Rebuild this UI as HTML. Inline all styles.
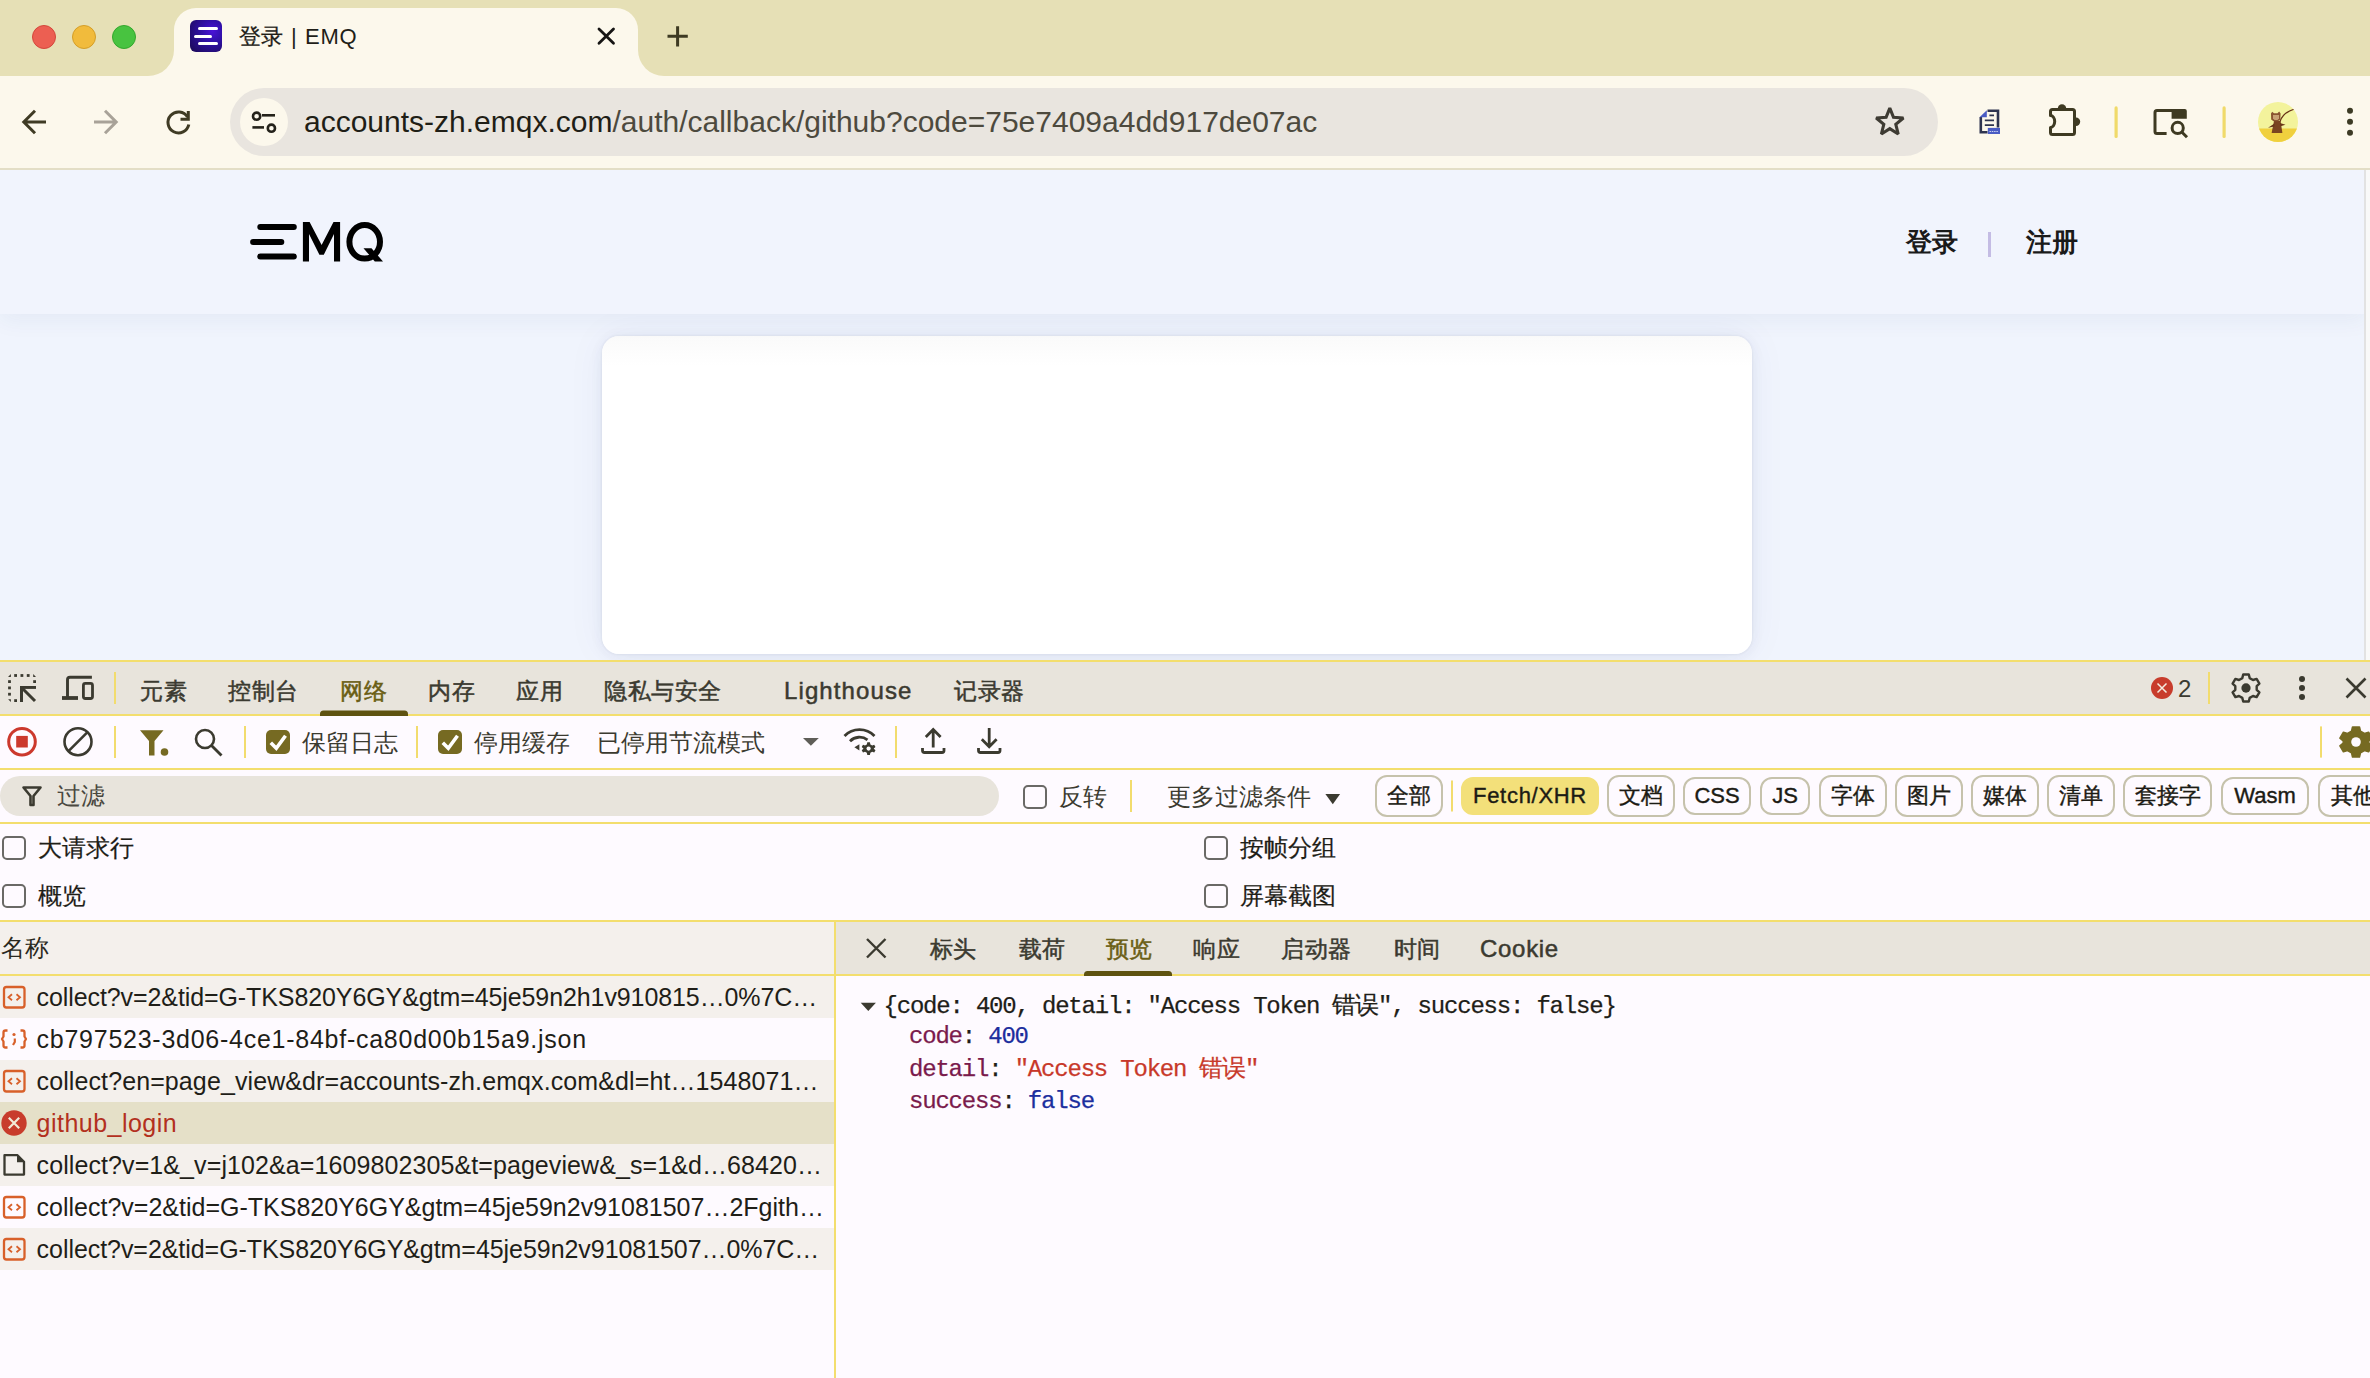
<!DOCTYPE html>
<html><head><meta charset="utf-8">
<style>
*{box-sizing:border-box;margin:0;padding:0}
html,body{width:2370px;height:1378px;overflow:hidden;background:#fefaff;font-family:"Liberation Sans",sans-serif;position:relative}
.a{position:absolute}
.t{position:absolute;white-space:nowrap;line-height:1}
svg{position:absolute;overflow:visible}
/* chrome */
#strip{left:0;top:0;width:2370px;height:76px;background:#e6e0b6}
#tb{left:0;top:76px;width:2370px;height:92px;background:#fcf8ec}
#tbline{left:0;top:168px;width:2370px;height:2px;background:#e3dec6}
.light{border-radius:50%;width:24px;height:24px;top:25px}
#tab{left:174px;top:8px;width:464px;height:70px;background:#fcf8ec;border-radius:22px 22px 0 0}
.flare{width:26px;height:26px;top:50px;background:#fcf8ec}
#omni{left:230px;top:88px;width:1708px;height:68px;border-radius:34px;background:#e9e5df}
#site{left:240px;top:98px;width:48px;height:48px;border-radius:50%;background:#fcf8ec}
/* page */
#page{left:0;top:170px;width:2370px;height:490px;background:#f0f4fd;overflow:hidden}
#hdr{left:0;top:0;width:2366px;height:144px;background:#f1f4fd;box-shadow:0 6px 22px rgba(40,60,120,0.06)}
#card{left:602px;top:166px;width:1150px;height:318px;background:linear-gradient(#fafafa,#fff 30px);border-radius:17px;box-shadow:0 0 2px 1px rgba(0,0,0,0.035),0 2px 14px rgba(40,50,110,0.065),0 0 40px rgba(40,60,140,0.05)}
/* devtools */
#dt{left:0;top:660px;width:2370px;height:718px;background:#fefaff}
.yl{position:absolute;left:0;width:2370px;height:2px;background:#f3de6e}
.ys{position:absolute;width:2px;background:#f3de6e}
.dtab{font-size:23px;letter-spacing:0.6px;color:#3b3a30;-webkit-text-stroke:0.5px currentColor}
.lbl{font-size:24px;color:#3b3a30}
.cb{position:absolute;width:24px;height:24px;border:2px solid #6a6966;border-radius:5px}
.cbc{position:absolute;width:24px;height:24px;border-radius:5px;background:#766a22}
.row{position:absolute;left:0;width:834px;height:42px}
.rt{position:absolute;left:36.6px;top:9px;font-size:25px;color:#1f1e18;white-space:nowrap;line-height:1}
.mono{font-family:"Liberation Mono",monospace;font-size:24px;letter-spacing:-1.2px;color:#1f1e18;white-space:pre;line-height:1;-webkit-text-stroke:0.25px currentColor}
.chip{position:absolute;height:42px;border:2px solid #c6c2ac;border-radius:12px;font-size:22px;color:#1c1b14;-webkit-text-stroke:0.4px currentColor;white-space:nowrap;line-height:38px;text-align:center}
</style></head><body>
<!-- TAB STRIP -->
<div class="a" id="strip"></div>
<div class="a light" style="left:32px;background:#ec5f52;border:1px solid #d4473b"></div>
<div class="a light" style="left:72px;background:#f1bb3c;border:1px solid #d49e28"></div>
<div class="a light" style="left:112px;background:#48c340;border:1px solid #34a72d"></div>
<div class="a" id="tab"></div>
<div class="a flare" style="left:148px"></div>
<div class="a flare" style="left:638px"></div>
<div class="a" style="left:148px;top:50px;width:26px;height:26px;background:#e6e0b6;border-radius:0 0 26px 0"></div>
<div class="a" style="left:638px;top:50px;width:26px;height:26px;background:#e6e0b6;border-radius:0 0 0 26px"></div>
<div class="a" id="tb"></div>
<div class="a" id="tbline"></div>

<!-- tab content -->
<div class="a" style="left:190px;top:20px;width:32px;height:32px;border-radius:6px;background:radial-gradient(circle at 70% 35%,#4a12d8 0%,#3010a8 35%,#1a0a50 100%)"></div>
<div class="a" style="left:198px;top:26.5px;width:20px;height:3.4px;border-radius:2px;background:#fff"></div>
<div class="a" style="left:194px;top:34.5px;width:18px;height:3.4px;border-radius:2px;background:#fff"></div>
<div class="a" style="left:198px;top:42px;width:20px;height:3.4px;border-radius:2px;background:#fff"></div>
<div class="t" id="title" style="left:239px;top:26px;font-size:22px;color:#1f1e18;word-spacing:2px"><span style="-webkit-text-stroke:0.3px currentColor">登录</span> | <span style="letter-spacing:0.8px">EMQ</span></div>
<svg style="left:0;top:0" width="2370" height="170">
 <g stroke="#161514" stroke-width="2.8" stroke-linecap="round" fill="none">
  <path d="M599 29 L613.5 43.3 M613.5 29 L599 43.3"/>
 </g>
 <g stroke="#3e3a22" stroke-width="3" fill="none">
  <path d="M667.5 36.3 H687.8 M677.6 26.2 V46.4"/>
 </g>
 <g stroke="#3f3b24" stroke-width="3" fill="none" stroke-linejoin="miter">
  <path d="M46 122 H24.5 M35 110.8 L23.8 122 L35 133.2"/>
 </g>
 <g stroke="#a8a298" stroke-width="3" fill="none">
  <path d="M94 122 H115.5 M105 110.8 L116.2 122 L105 133.2"/>
 </g>
 <g stroke="#3f3b24" stroke-width="3" fill="none">
  <path d="M187.5 117 A10.5 10.5 0 1 0 188.8 124.5"/>
  <path d="M180.5 119.3 H188.3 V111" stroke-linejoin="miter"/>
 </g>
</svg>
<div class="a" id="omni"></div>
<div class="a" id="site"></div>
<svg style="left:0;top:0" width="2370" height="170">
 <g stroke="#24221a" stroke-width="2.6" fill="none">
  <circle cx="256.6" cy="116.2" r="3.6"/>
  <path d="M262 115.3 H275"/>
  <path d="M252.4 127.4 H264"/>
  <circle cx="271.4" cy="128.2" r="3.6"/>
 </g>
</svg>
<div class="t" id="url" style="left:304px;top:107px;font-size:30px;color:#1f1e16">accounts-zh.emqx.com<span style="color:#4d4a3e">/auth/callback/github?code=75e7409a4dd917de07ac</span></div>
<svg style="left:0;top:0" width="2370" height="170">
 <path d="M1889.8 108.1 L1893.5 117.3 L1903.4 118.0 L1895.8 124.3 L1898.2 134.0 L1889.8 128.7 L1881.4 134.0 L1883.8 124.3 L1876.2 118.0 L1886.1 117.3 Z" fill="none" stroke="#3e3b33" stroke-width="3.1" stroke-linejoin="miter" stroke-miterlimit="2.2"/>
 <!-- doc ext icon -->
 <path d="M1987.5 110.7 H1998 V127.5" fill="none" stroke="#2e3450" stroke-width="2.6"/>
 <path d="M1980.8 117 V132.3 H1987.5" fill="none" stroke="#2e3450" stroke-width="2.6"/>
 <path d="M1979.5 117.3 L1986.8 110.2 V117.3 Z" fill="#4a5cc4"/>
 <path d="M1989.4 115.3 H1994 M1984.8 120.3 H1994 M1984.8 125.1 H1994" stroke="#2e3450" stroke-width="1.8"/>
 <rect x="1987.8" y="127.9" width="12.2" height="6.1" fill="#4a5cc4"/>
 <path d="M1989.5 131.5 H1998" stroke="#c8d0f0" stroke-width="1" stroke-dasharray="1.5 0.8"/>
 <!-- puzzle -->
 <path d="M2052.5 109.5 H2072.5 A2 2 0 0 1 2074.5 111.5 V132.5 A2 2 0 0 1 2072.5 134.5 H2052.5 A2 2 0 0 1 2050.5 132.5 V127.5 A4.2 6 0 0 0 2050.5 115.5 V111.5 A2 2 0 0 1 2052.5 109.5 Z" fill="none" stroke="#3e3a22" stroke-width="3" stroke-linejoin="round"/>
 <path d="M2057.8 108.5 A4.2 4.2 0 0 1 2066.2 108.5 Z" fill="#3e3a22"/>
 <path d="M2076 117.6 A4.2 4.2 0 0 1 2076 126 Z" fill="#3e3a22"/>
 <rect x="2114.5" y="106.3" width="3.2" height="31.7" rx="1.6" fill="#f0da6a"/>
 <!-- tab search -->
 <path d="M2166.6 133.5 H2157 A2 2 0 0 1 2155 131.5 V112.5 A2 2 0 0 1 2157 110.5 H2172" fill="none" stroke="#3e3a22" stroke-width="3"/>
 <path d="M2171.6 109 H2184.8 A2 2 0 0 1 2186.8 111 V118.8 H2171.6 Z" fill="#3e3a22"/>
 <circle cx="2177.7" cy="127.9" r="5.6" fill="none" stroke="#3e3a22" stroke-width="3"/>
 <path d="M2181.5 131.7 L2187 137.2" stroke="#3e3a22" stroke-width="3"/>
 <rect x="2222.5" y="106.3" width="3.2" height="31.7" rx="1.6" fill="#f0da6a"/>
 <!-- avatar -->
 <defs><clipPath id="avc"><circle cx="2278" cy="122" r="20"/></clipPath></defs>
 <g clip-path="url(#avc)">
  <rect x="2258" y="102" width="40" height="40" fill="#f3f39c"/>
  <rect x="2258" y="128.5" width="40" height="14" fill="#f0d03e"/>
  <path d="M2274 121 H2280.6 L2282.4 133 H2271.6 Z" fill="#7a4420"/>
  <path d="M2268 127.8 L2274.5 123.5 L2274.5 126.5 Z M2285.5 124.8 L2280 123 L2280.5 126.2 Z" fill="#6a3818"/>
  <path d="M2271 113.5 L2272.2 111.8 L2274 113.2 H2277.5 L2279.2 111.6 L2280.6 113.5 L2280.3 119.5 L2278 121.3 H2273.5 L2271.2 119.5 Z" fill="#8a5530"/>
  <path d="M2273 115 H2279 V118.5 L2277.5 120 H2274.5 L2273 118.5 Z" fill="#c8a274"/>
  <path d="M2280 121.5 Q2283 112.5 2294.5 109" stroke="#6a3418" stroke-width="1.3" fill="none"/>
 </g>
 <g fill="#3c3a24"><circle cx="2350" cy="110.8" r="3"/><circle cx="2350" cy="121.8" r="3"/><circle cx="2350" cy="132.8" r="3"/></g>
</svg>

<!-- PAGE -->
<div class="a" id="page">
 <div class="a" id="card"></div>
 <div class="a" id="hdr"></div>
 <div class="a" style="left:2364px;top:0;width:6px;height:490px;background:#f9f9f9;border-left:2px solid #e2e2e2"></div>
</div>
<svg style="left:0;top:0" width="2370" height="660">
 <g fill="#000">
  <rect x="257.3" y="224.1" width="39.5" height="6" rx="3"/>
  <rect x="250.1" y="238.9" width="34.2" height="6" rx="3"/>
  <rect x="257.3" y="253.6" width="39.5" height="6" rx="3"/>
  <path d="M302.9 222 H309.6 L321.6 245 L333.5 222 H340.1 V261.5 H334 V234 L323.8 254.7 H319.4 L309 234 V261.5 H302.9 Z"/>
 </g>
 <ellipse cx="364.7" cy="241.8" rx="15.3" ry="16.8" fill="none" stroke="#000" stroke-width="6"/>
 <path d="M363.5 248.2 H371.5 L383 261.5 H374.8 Z" fill="#000"/>
</svg>
<div class="t" style="left:1906px;top:229px;font-size:26px;font-weight:700;color:#1a1a1a">登录</div>
<div class="a" style="left:1988px;top:232px;width:3px;height:25px;background:#c4bce4"></div>
<div class="t" style="left:2026px;top:229px;font-size:26px;font-weight:700;color:#1a1a1a">注册</div>

<!-- DEVTOOLS -->
<div class="a" id="dt"></div>
<div class="a" style="left:0;top:662px;width:2370px;height:52px;background:#e8e4dc"></div>
<div class="yl" style="top:660px"></div>
<div class="yl" style="top:714px"></div>
<div class="yl" style="top:768px"></div>
<div class="yl" style="top:822px"></div>
<div class="yl" style="top:920px"></div>
<!-- main tabs -->
<svg style="left:0;top:0" width="2370" height="1378">
 <!-- inspect icon -->
 <g fill="#3b3a30">
  <path d="M8.1 676.9 L10.9 674.1 V676.9 Z"/>
  <rect x="14.2" y="674.1" width="2.8" height="2.8"/><rect x="20.5" y="674.1" width="2.8" height="2.8"/><rect x="26.8" y="674.1" width="2.8" height="2.8"/>
  <path d="M33.2 674.1 L36 676.9 H33.2 Z"/>
  <rect x="8.1" y="680.2" width="2.8" height="2.8"/><rect x="8.1" y="686.5" width="2.8" height="2.8"/><rect x="8.1" y="692.8" width="2.8" height="2.8"/>
  <path d="M8.1 699.2 H10.9 V702 Z"/>
  <rect x="33.2" y="680.2" width="2.8" height="2.8"/>
  <rect x="14.2" y="699.2" width="2.8" height="2.8"/>
  <rect x="20" y="686" width="16" height="2.9"/>
  <rect x="20" y="686" width="3" height="16"/>
 </g>
 <path d="M22 688 L35 701" stroke="#3b3a30" stroke-width="3" fill="none"/>
 <!-- device icon -->
 <path d="M91.9 677.3 H70 A2.5 2.5 0 0 0 67.5 679.8 V697" stroke="#3b3a30" stroke-width="2.9" fill="none"/>
 <rect x="62" y="696.1" width="16" height="3.8" fill="#3b3a30"/>
 <rect x="83.4" y="683.4" width="9.1" height="15.1" rx="2" fill="none" stroke="#3b3a30" stroke-width="2.8"/>
 <rect x="114" y="672" width="2" height="32" fill="#f2dc6e"/>
 <path d="M320 716 V714 A3.5 3.5 0 0 1 323.5 710.5 H404.5 A3.5 3.5 0 0 1 408 714 V716 Z" fill="#5e5210"/>
</svg>
<div class="t dtab" style="left:140px;top:680px">元素</div>
<div class="t dtab" style="left:228px;top:680px">控制台</div>
<div class="t dtab" style="left:340px;top:680px;color:#6b5e14">网络</div>
<div class="t dtab" style="left:428px;top:680px">内存</div>
<div class="t dtab" style="left:516px;top:680px">应用</div>
<div class="t dtab" style="left:604px;top:680px">隐私与安全</div>
<div class="t dtab" style="left:784px;top:679px;font-size:24px;letter-spacing:1.1px">Lighthouse</div>
<div class="t dtab" style="left:954px;top:680px">记录器</div>
<svg style="left:0;top:0" width="2370" height="1378">
 <circle cx="2162" cy="688" r="11" fill="#c83c2c"/>
 <path d="M2157.5 683.5 L2166.5 692.5 M2166.5 683.5 L2157.5 692.5" stroke="#f4ece0" stroke-width="1.5"/>
 <rect x="2208" y="672" width="2" height="32" fill="#f2dc6e"/>
 <!-- gear -->
 <g transform="translate(2246 688) scale(0.93)">
  <path id="gearp" d="M-3 -14.5 H3 L4 -10.6 L7.5 -8.6 L11.4 -9.8 L14.4 -4.6 L11.5 -1.9 V1.9 L14.4 4.6 L11.4 9.8 L7.5 8.6 L4 10.6 L3 14.5 H-3 L-4 10.6 L-7.5 8.6 L-11.4 9.8 L-14.4 4.6 L-11.5 1.9 V-1.9 L-14.4 -4.6 L-11.4 -9.8 L-7.5 -8.6 L-4 -10.6 Z" fill="none" stroke="#3b3a30" stroke-width="2.6" stroke-linejoin="round"/>
  <circle r="5" fill="#3b3a30"/>
 </g>
 <g fill="#3b3a30"><circle cx="2302" cy="679" r="3"/><circle cx="2302" cy="688" r="3"/><circle cx="2302" cy="697" r="3"/></g>
 <path d="M2346.5 678.5 L2365.5 697.5 M2365.5 678.5 L2346.5 697.5" stroke="#3b3a30" stroke-width="2.6"/>
</svg>
<div class="t" style="left:2178px;top:677px;font-size:24px;color:#3b3a30">2</div>

<!-- toolbar row -->
<svg style="left:0;top:0" width="2370" height="1378">
 <circle cx="22" cy="741.7" r="13.3" fill="none" stroke="#cc392d" stroke-width="3"/>
 <rect x="16.2" y="735.9" width="11.6" height="11.6" fill="#cc392d"/>
 <circle cx="78" cy="741.7" r="13.5" fill="none" stroke="#3b3a30" stroke-width="2.6"/>
 <path d="M87.5 732.2 L68.5 751.2" stroke="#3b3a30" stroke-width="2.6"/>
 <rect x="114" y="726" width="2" height="32" fill="#f2dc6e"/>
 <path d="M140 730.2 H163.5 L154.5 741 V755.5 H149 V741 Z" fill="#766a22"/>
 <circle cx="164.5" cy="752" r="3.8" fill="#766a22"/>
 <circle cx="205" cy="739" r="9" fill="none" stroke="#3b3a30" stroke-width="2.6"/>
 <path d="M211.5 745.5 L221.5 755.5" stroke="#3b3a30" stroke-width="2.8"/>
 <rect x="244" y="726" width="2" height="32" fill="#f2dc6e"/>
 <rect x="416" y="726" width="2" height="32" fill="#f2dc6e"/>
 <path d="M803 738 H818.8 L810.9 745.8 Z" fill="#5f5d58"/>
 <!-- wifi -->
 <g fill="none" stroke="#3b3a30" stroke-width="2.8" stroke-linecap="butt">
  <path d="M844.5 736 A21 21 0 0 1 874.5 736"/>
  <path d="M850 741.2 A13.5 13.5 0 0 1 867.5 739.8"/>
 </g>
 <path d="M854.4 747.3 L859.4 744.2 L859.4 750.5 Z" fill="#3b3a30"/>
 <g transform="translate(868.6 748.6)">
  <path d="M-1.3 -6.3 H1.3 L1.8 -4.2 L3.6 -3.2 L5.6 -3.9 L6.9 -1.6 L5.2 -0.2 V0.2 L6.9 1.6 L5.6 3.9 L3.6 3.2 L1.8 4.2 L1.3 6.3 H-1.3 L-1.8 4.2 L-3.6 3.2 L-5.6 3.9 L-6.9 1.6 L-5.2 0.2 V-0.2 L-6.9 -1.6 L-5.6 -3.9 L-3.6 -3.2 L-1.8 -4.2 Z" fill="#3b3a30"/>
  <circle r="2.1" fill="#fefaff"/>
 </g>
 <rect x="895" y="726" width="2" height="32" fill="#f2dc6e"/>
 <g fill="none" stroke="#3b3a30" stroke-width="2.8">
  <path d="M922.5 748 V750.5 A2 2 0 0 0 924.5 752.5 H942 A2 2 0 0 0 944 750.5 V748"/><path d="M933.2 730 V747.5 M925.8 737 L933.2 729.6 L940.6 737"/>
  <path d="M978.5 748 V750.5 A2 2 0 0 0 980.5 752.5 H998 A2 2 0 0 0 1000 750.5 V748"/><path d="M989.2 728 V746.5 M981.8 739.3 L989.2 746.7 L996.6 739.3"/>
 </g>
 <rect x="2320" y="726.4" width="2" height="31.2" fill="#f2dc6e"/>
 <g transform="translate(2356 742)">
  <path d="M-3.5 -15 H3.5 L4.5 -10.8 L8.5 -8.5 L12.6 -9.8 L16.1 -3.8 L12.8 -1 V1 L16.1 3.8 L12.6 9.8 L8.5 8.5 L4.5 10.8 L3.5 15 H-3.5 L-4.5 10.8 L-8.5 8.5 L-12.6 9.8 L-16.1 3.8 L-12.8 1 V-1 L-16.1 -3.8 L-12.6 -9.8 L-8.5 -8.5 L-4.5 -10.8 Z" fill="#766a22" stroke="#766a22" stroke-width="1.5" stroke-linejoin="round"/>
  <circle r="4.8" fill="#fefaff"/>
 </g>
</svg>
<div class="cbc" style="left:266px;top:730px"></div>
<div class="cbc" style="left:438px;top:730px"></div>
<svg style="left:0;top:0" width="2370" height="1378">
 <path d="M270.8 742.8 L276.3 748.3 L285.5 735.8" fill="none" stroke="#fff" stroke-width="3.6"/>
 <path d="M442.8 742.8 L448.3 748.3 L457.5 735.8" fill="none" stroke="#fff" stroke-width="3.6"/>
</svg>
<div class="t lbl" style="left:302px;top:731px">保留日志</div>
<div class="t lbl" style="left:474px;top:731px">停用缓存</div>
<div class="t lbl" style="left:597px;top:731px">已停用节流模式</div>
<!-- filter row -->
<div class="a" style="left:0;top:776px;width:999px;height:40px;border-radius:20px;background:#e8e4dc"></div>
<svg style="left:0;top:0" width="2370" height="1378">
 <path d="M23.5 787.5 H40.5 L33.5 796 V805 H30.5 V796 Z" fill="none" stroke="#3b3a30" stroke-width="2.6" stroke-linejoin="round"/>
 <rect x="1130" y="780" width="2" height="32" fill="#f2dc6e"/>
 <rect x="1451" y="780.5" width="2" height="31" fill="#f2dc6e"/>
 <path d="M1325.4 794 H1340.1 L1332.8 804.3 Z" fill="#3b3a30"/>
</svg>
<div class="t lbl" style="left:57px;top:784px;color:#4a4840">过滤</div>
<div class="cb" style="left:1023px;top:784.5px"></div>
<div class="t lbl" style="left:1059px;top:785px">反转</div>
<div class="t lbl" style="left:1167px;top:785px">更多过滤条件</div>
<div class="chip" style="left:1375px;top:775px;width:68px">全部</div>
<div class="chip" style="left:1461px;top:777px;width:138px;height:38px;line-height:34px;background:#f3e07a;border-color:#f3e07a;letter-spacing:0.7px">Fetch/XHR</div>
<div class="chip" style="left:1607px;top:775px;width:68px">文档</div>
<div class="chip" style="left:1683px;top:777px;width:68px;height:38px;line-height:34px">CSS</div>
<div class="chip" style="left:1760px;top:777px;width:50px;height:38px;line-height:34px">JS</div>
<div class="chip" style="left:1819px;top:775px;width:68px">字体</div>
<div class="chip" style="left:1895px;top:775px;width:68px">图片</div>
<div class="chip" style="left:1971px;top:775px;width:68px">媒体</div>
<div class="chip" style="left:2047px;top:775px;width:68px">清单</div>
<div class="chip" style="left:2123px;top:775px;width:89px">套接字</div>
<div class="chip" style="left:2221px;top:777px;width:88px;height:38px;line-height:34px">Wasm</div>
<div class="chip" style="left:2318px;top:775px;width:80px;text-align:left;padding-left:11px">其他</div>
<!-- check rows -->
<div class="cb" style="left:2px;top:836px"></div>
<div class="t lbl" style="left:38px;top:836px;color:#1f1e18;-webkit-text-stroke:0.2px currentColor">大请求行</div>
<div class="cb" style="left:2px;top:884px"></div>
<div class="t lbl" style="left:38px;top:884px;color:#1f1e18;-webkit-text-stroke:0.2px currentColor">概览</div>
<div class="cb" style="left:1204px;top:836px"></div>
<div class="t lbl" style="left:1240px;top:836px;color:#1f1e18;-webkit-text-stroke:0.2px currentColor">按帧分组</div>
<div class="cb" style="left:1204px;top:884px"></div>
<div class="t lbl" style="left:1240px;top:884px;color:#1f1e18;-webkit-text-stroke:0.2px currentColor">屏幕截图</div>

<!-- table -->
<div class="a" style="left:0;top:922px;width:834px;height:52px;background:#f4f0ec"></div>
<div class="a" style="left:836px;top:922px;width:1534px;height:52px;background:#e8e4dc"></div>
<div class="yl" style="top:974px"></div>
<div class="ys" style="left:834px;top:920px;height:458px"></div>
<div class="t lbl" style="left:1px;top:936px;color:#2a2920">名称</div>
<div class="row" style="top:976px;background:#f4f0ec"><div class="rt" id="r1" style="letter-spacing:-0.095px">collect?v=2&amp;tid=G-TKS820Y6GY&amp;gtm=45je59n2h1v910815…0%7C…</div></div>
<div class="row" style="top:1018px"><div class="rt" id="r2" style="letter-spacing:0.74px">cb797523-3d06-4ce1-84bf-ca80d00b15a9.json</div></div>
<div class="row" style="top:1060px;background:#f4f0ec"><div class="rt" id="r3" style="letter-spacing:0.1px">collect?en=page_view&amp;dr=accounts-zh.emqx.com&amp;dl=ht…1548071…</div></div>
<div class="row" style="top:1102px;background:#e5e0c8"><div class="rt" id="r4" style="letter-spacing:0.47px;color:#b3301e">github_login</div></div>
<div class="row" style="top:1144px;background:#f4f0ec"><div class="rt" id="r5" style="letter-spacing:0.09px">collect?v=1&amp;_v=j102&amp;a=1609802305&amp;t=pageview&amp;_s=1&amp;d…68420…</div></div>
<div class="row" style="top:1186px"><div class="rt" id="r6" style="letter-spacing:0px">collect?v=2&amp;tid=G-TKS820Y6GY&amp;gtm=45je59n2v91081507…2Fgith…</div></div>
<div class="row" style="top:1228px;background:#f4f0ec"><div class="rt" id="r7" style="letter-spacing:-0.057px">collect?v=2&amp;tid=G-TKS820Y6GY&amp;gtm=45je59n2v91081507…0%7C…</div></div>
<svg style="left:0;top:0" width="2370" height="1378">
 <defs>
  <g id="xhr"><rect x="4" y="-10" width="20.5" height="20.5" rx="2.5" fill="none" stroke="#d8602a" stroke-width="2.3"/>
   <path d="M12 -2.7 L8.5 0.3 L12 3.3 M16.5 -2.7 L20 0.3 L16.5 3.3" fill="none" stroke="#d8602a" stroke-width="1.8"/></g>
 </defs>
 <use href="#xhr" x="0" y="997"/>
 <use href="#xhr" x="0" y="1081"/>
 <use href="#xhr" x="0" y="1207"/>
 <use href="#xhr" x="0" y="1249"/>
 <!-- json icon -->
 <g fill="none" stroke="#d8602a" stroke-width="2.3" stroke-linejoin="round">
  <path d="M7.5 1030.5 H5.5 A2 2 0 0 0 3.5 1032.5 V1036.5 L2 1039 L3.5 1041.5 V1045.5 A2 2 0 0 0 5.5 1047.5 H7.5"/>
  <path d="M20.5 1030.5 H22.5 A2 2 0 0 1 24.5 1032.5 V1036.5 L26 1039 L24.5 1041.5 V1045.5 A2 2 0 0 1 22.5 1047.5 H20.5"/>
 </g>
 <circle cx="14" cy="1034.5" r="1.6" fill="#d8602a"/>
 <path d="M14.8 1038.5 V1042 L13 1045" stroke="#d8602a" stroke-width="2.2" fill="none"/>
 <!-- error icon -->
 <circle cx="14" cy="1123" r="12.7" fill="#c83c2c"/>
 <path d="M8.8 1117.8 L19.2 1128.2 M19.2 1117.8 L8.8 1128.2" stroke="#f2ead8" stroke-width="2.2"/>
 <!-- doc icon -->
 <path d="M4.5 1155.2 H17.5 L24 1161.7 V1174.6 H4.5 Z" fill="none" stroke="#3b3a30" stroke-width="2.3" stroke-linejoin="round"/>
 <path d="M17 1154.5 L24.8 1162.2 H17 Z" fill="#3b3a30"/>
</svg>
<!-- details -->
<svg style="left:0;top:0" width="2370" height="1378">
 <path d="M867 939 L885.5 957.5 M885.5 939 L867 957.5" stroke="#3b3a30" stroke-width="2.4"/>
 <path d="M1084 976 V974.5 A3.5 3.5 0 0 1 1087.5 971 H1168.5 A3.5 3.5 0 0 1 1172 974.5 V976 Z" fill="#5e5210"/>
 <path d="M860.7 1002.8 H875.9 L868.3 1010.9 Z" fill="#3b3a30"/>
</svg>
<div class="t dtab" style="left:929.5px;top:938px">标头</div>
<div class="t dtab" style="left:1018.5px;top:938px">载荷</div>
<div class="t dtab" style="left:1105.5px;top:938px;color:#6b5e14">预览</div>
<div class="t dtab" style="left:1193px;top:938px">响应</div>
<div class="t dtab" style="left:1281px;top:938px">启动器</div>
<div class="t dtab" style="left:1393.5px;top:938px">时间</div>
<div class="t dtab" style="left:1480px;top:937px;font-size:24px;letter-spacing:0.7px">Cookie</div>
<div class="a mono" style="left:883.5px;top:994.5px">{code: 400, detail: "Access Token 错误", success: false}</div>
<div class="a mono" style="left:909px;top:1025px"><span style="color:#7a1b4c">code</span>: <span style="color:#1c2e9e">400</span></div>
<div class="a mono" style="left:909px;top:1057.5px"><span style="color:#7a1b4c">detail</span>: <span style="color:#c8382a">"Access Token 错误"</span></div>
<div class="a mono" style="left:909px;top:1089.5px"><span style="color:#7a1b4c">success</span>: <span style="color:#1c2e9e">false</span></div>
</body></html>
